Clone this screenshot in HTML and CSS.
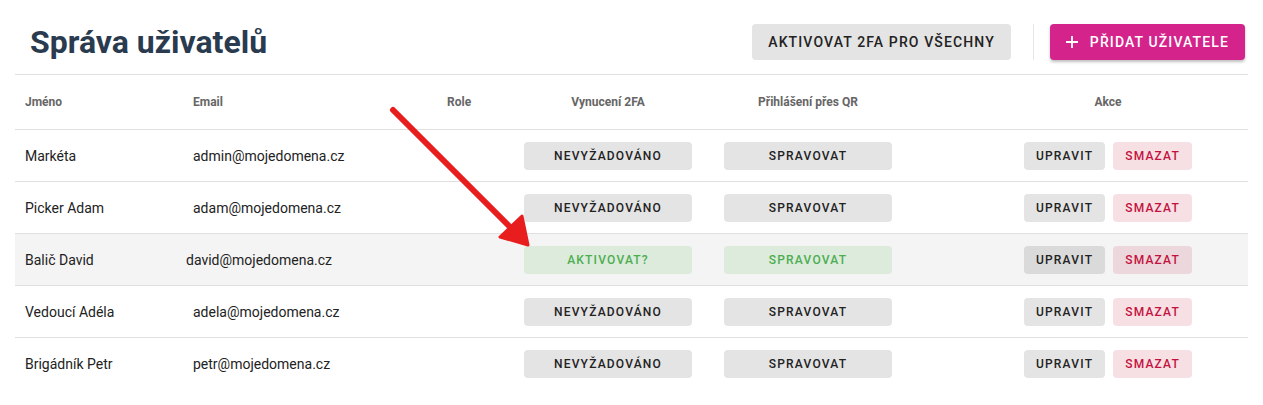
FILE: index.html
```html
<!DOCTYPE html>
<html lang="cs">
<head>
  <meta charset="UTF-8" />
  <meta name="viewport" content="width=device-width, initial-scale=1.0"/>
  <title>Správa uživatelů</title>
  <link rel="stylesheet" href="styles.css">
</head>
<body>
  <div class="container">
    <div class="page-head">
      <h1>Správa uživatelů</h1>
      <div class="head-actions">
        <button class="btn btn-grey">Aktivovat 2FA pro všechny</button>
        <span class="divider"></span>
        <button class="btn btn-pink">
          <svg width="14" height="14" viewBox="0 0 14 14"><path d="M7 1v12M1 7h12" stroke="#fff" stroke-width="1.8"/></svg>
          Přidat uživatele
        </button>
      </div>
    </div>

    <div class="table">
      <div class="row row-head">
        <div class="cell">Jméno</div>
        <div class="cell">Email</div>
        <div class="cell">Role</div>
        <div class="cell center">Vynucení 2FA</div>
        <div class="cell center">Přihlášení přes QR</div>
        <div class="cell center actions">Akce</div>
      </div>

      <div class="row">
        <div class="cell">Markéta</div>
        <div class="cell">admin@mojedomena.cz</div>
        <div class="cell"></div>
        <div class="cell center"><button class="chip">Nevyžadováno</button></div>
        <div class="cell center"><button class="chip">Spravovat</button></div>
        <div class="cell center actions"><button class="sm">Upravit</button><button class="sm sm-red">Smazat</button></div>
      </div>

      <div class="row">
        <div class="cell">Picker Adam</div>
        <div class="cell">adam@mojedomena.cz</div>
        <div class="cell"></div>
        <div class="cell center"><button class="chip">Nevyžadováno</button></div>
        <div class="cell center"><button class="chip">Spravovat</button></div>
        <div class="cell center actions"><button class="sm">Upravit</button><button class="sm sm-red">Smazat</button></div>
      </div>

      <div class="row row-hover">
        <div class="cell">Balič David</div>
        <div class="cell email-shift">david@mojedomena.cz</div>
        <div class="cell"></div>
        <div class="cell center"><button class="chip chip-green">Aktivovat?</button></div>
        <div class="cell center"><button class="chip chip-green">Spravovat</button></div>
        <div class="cell center actions"><button class="sm">Upravit</button><button class="sm sm-red">Smazat</button></div>
      </div>

      <div class="row">
        <div class="cell">Vedoucí Adéla</div>
        <div class="cell">adela@mojedomena.cz</div>
        <div class="cell"></div>
        <div class="cell center"><button class="chip">Nevyžadováno</button></div>
        <div class="cell center"><button class="chip">Spravovat</button></div>
        <div class="cell center actions"><button class="sm">Upravit</button><button class="sm sm-red">Smazat</button></div>
      </div>

      <div class="row row-last">
        <div class="cell">Brigádník Petr</div>
        <div class="cell">petr@mojedomena.cz</div>
        <div class="cell"></div>
        <div class="cell center"><button class="chip">Nevyžadováno</button></div>
        <div class="cell center"><button class="chip">Spravovat</button></div>
        <div class="cell center actions"><button class="sm">Upravit</button><button class="sm sm-red">Smazat</button></div>
      </div>
    </div>
  </div>

  <!-- šipka přes tabulku -->
  <svg class="arrow" width="1263" height="405" viewBox="0 0 1263 405">
    <line x1="393" y1="110" x2="512" y2="229" stroke="#e81e1e" stroke-width="6" stroke-linecap="round"/>
    <polygon points="500,237 522,216 528,245" fill="#e81e1e" stroke="#e81e1e" stroke-width="3" stroke-linejoin="round"/>
  </svg>
</body>
</html>
```

FILE: styles.css
```css
body {
  font-family: Roboto, 'Liberation Sans', sans-serif;
  background: #fff;
  color: #222;
  margin: 0;
  padding: 0;
  position: relative;
}
.container {
  margin: 0 15px;
}
.page-head {
  display: flex;
  align-items: center;
  justify-content: space-between;
  padding: 24px 3px 14px 15px;
  border-bottom: 1px solid #e0e0e0;
}
h1 {
  margin: 0;
  font-size: 32px;
  line-height: 36px;
  font-weight: 700;
  color: #2a3b4f;
}
.head-actions {
  display: flex;
  align-items: center;
}
.btn {
  height: 36px;
  padding: 0 16px;
  border: none;
  border-radius: 4px;
  font-family: inherit;
  font-size: 14px;
  font-weight: 500;
  letter-spacing: 0.08em;
  text-transform: uppercase;
  cursor: pointer;
  display: flex;
  align-items: center;
}
.btn-grey {
  background: #e4e4e4;
  color: #222;
}
.btn-pink {
  background: #d4238b;
  color: #fff;
  gap: 11px;
  padding: 0 16px 0 15px;
  box-shadow: 0 2px 3px rgba(0,0,0,0.25);
}
.divider {
  width: 1px;
  height: 36px;
  background: #e6e6e6;
  margin: 0 16px 0 22px;
}
.row {
  display: grid;
  grid-template-columns: 168px 254px 71px 200px 200px 1fr;
  height: 51px;
  align-items: center;
  border-bottom: 1px solid #e0e0e0;
  font-size: 14px;
}
.row-head {
  height: 54px;
  font-size: 12px;
  font-weight: 700;
  color: #666;
}
.row-hover {
  background: #f4f4f4;
}
.row-last {
  border-bottom: none;
}
.cell {
  padding-left: 10px;
}
.cell.center {
  padding-left: 0;
  display: flex;
  justify-content: center;
}
.cell.actions {
  padding-left: 60px;
  gap: 8px;
}
.email-shift {
  margin-left: -7px;
}
.chip, .sm {
  height: 28px;
  border: none;
  border-radius: 4px;
  background: #e4e4e4;
  color: #222;
  font-family: inherit;
  font-size: 12px;
  font-weight: 500;
  letter-spacing: 0.1em;
  text-transform: uppercase;
  cursor: pointer;
}
.chip {
  width: 168px;
}
.chip-green {
  background: #dcebdc;
  color: #4cae50;
}
.sm {
  padding: 0 12px;
}
.row-hover .sm {
  background: #dadada;
}
.sm-red {
  background: #f7e0e4;
  color: #c3123f;
}
.row-hover .sm-red {
  background: #ecd8dc;
}
.arrow {
  position: absolute;
  top: 0;
  left: 0;
  pointer-events: none;
}
```
